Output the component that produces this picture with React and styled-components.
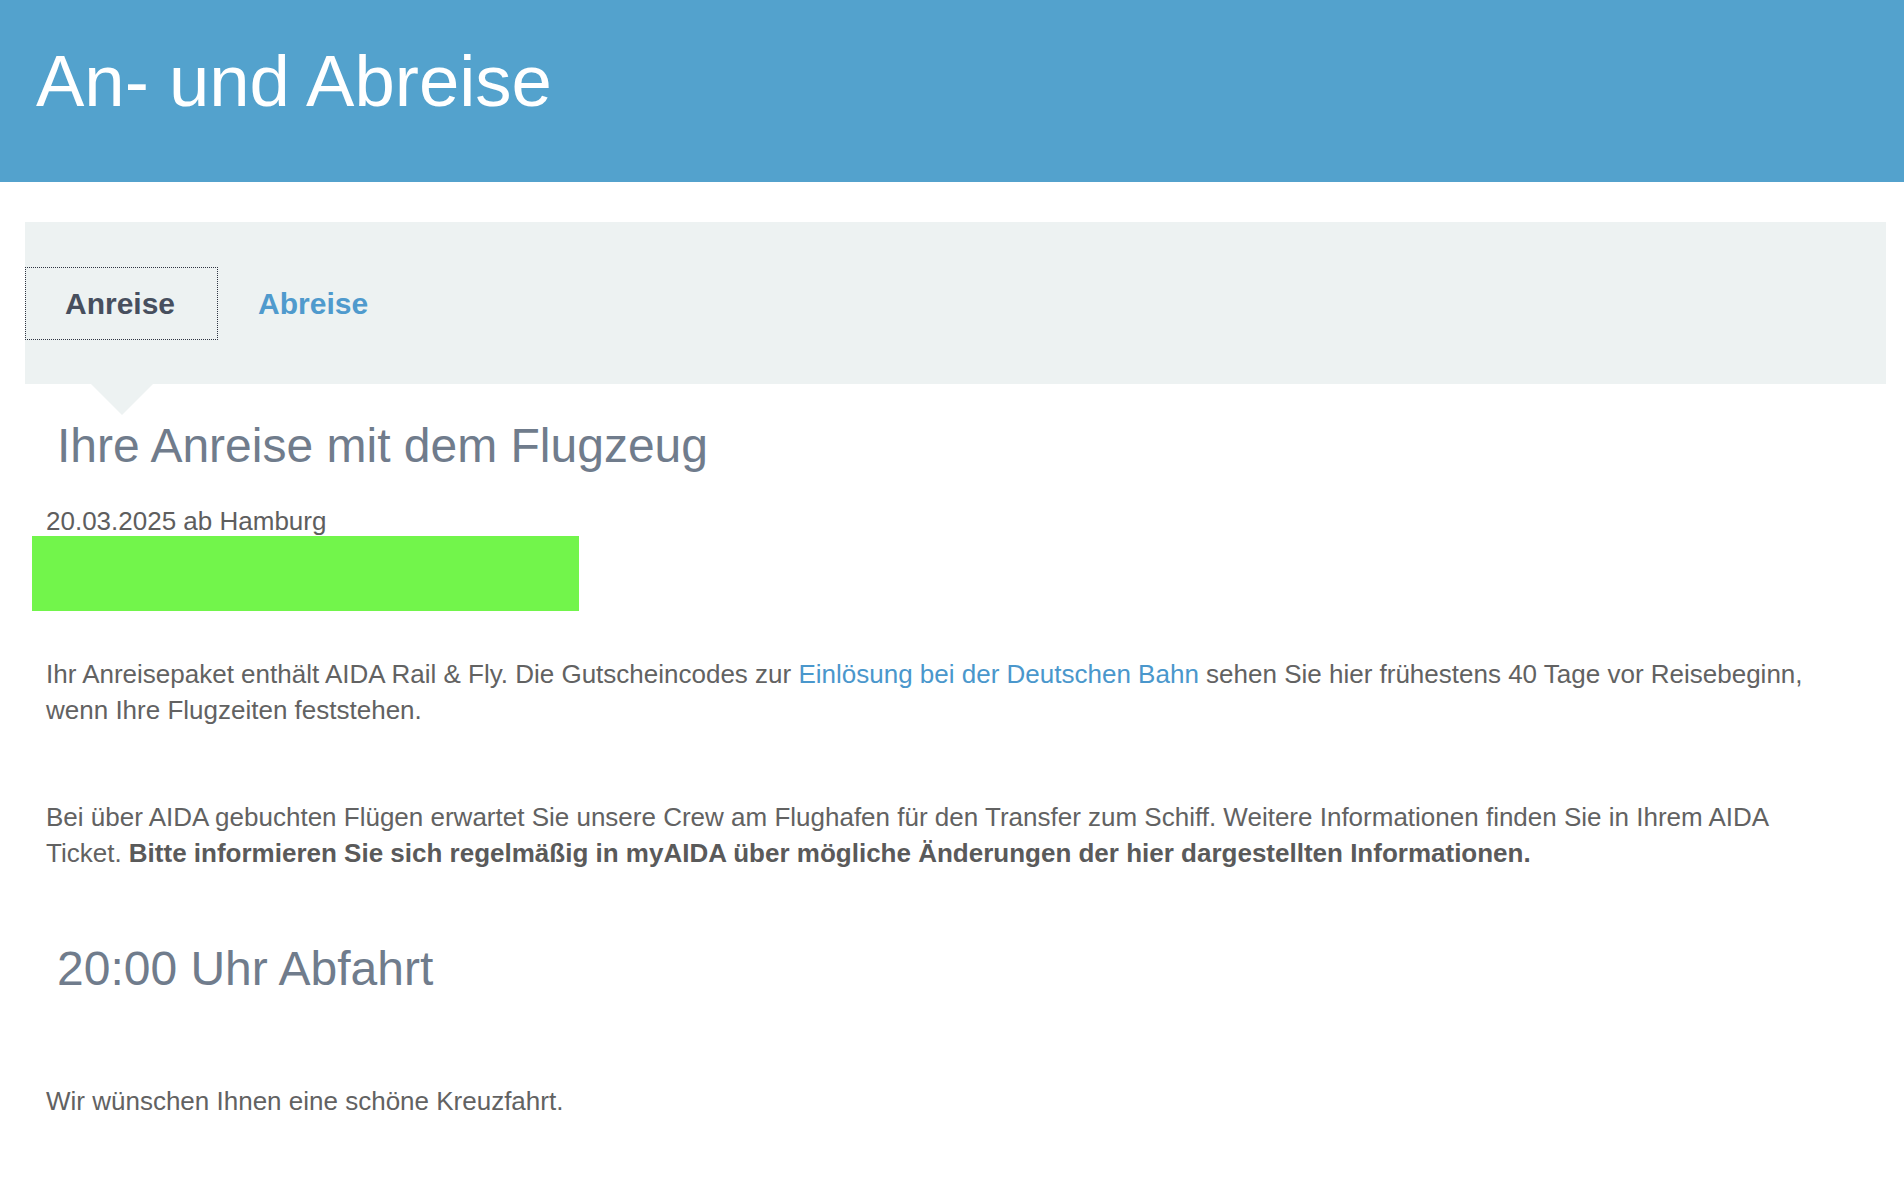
import React from 'react';
import styled, { createGlobalStyle } from 'styled-components';

const GlobalStyle = createGlobalStyle`
    html, body {
        margin: 0;
        padding: 0;
        background: #ffffff;
    }
    body {
        font-family: 'Liberation Sans', Arial, Helvetica, sans-serif;
        color: #626262;
    }
    * {
        box-sizing: border-box;
    }
`;

const tabs = [
    { key: 'arrival', label: 'Anreise' },
    { key: 'departure', label: 'Abreise' },
];

const App = () => {
    const active = 'arrival';
    return (
        <Page>
            <GlobalStyle />
            <Header>
                <PageTitle>An- und Abreise</PageTitle>
            </Header>
            <TabPanel>
                <TabList>
                    {tabs.map((tab) => (
                        <Tab key={tab.key} $active={tab.key === active}>
                            {tab.label}
                        </Tab>
                    ))}
                </TabList>
            </TabPanel>
            <Content>
                <Heading>Ihre Anreise mit dem Flugzeug</Heading>
                <DateLine>20.03.2025 ab Hamburg</DateLine>
                <Redacted />
                <Paragraph $gap="45px">
                    Ihr Anreisepaket enthält AIDA Rail &amp; Fly. Die
                    Gutscheincodes zur{' '}
                    <Link href="#">Einlösung bei der Deutschen Bahn</Link>{' '}
                    sehen Sie hier frühestens 40 Tage vor Reisebeginn, wenn
                    Ihre Flugzeiten feststehen.
                </Paragraph>
                <Paragraph $gap="71px">
                    Bei über AIDA gebuchten Flügen erwartet Sie unsere Crew am
                    Flughafen für den Transfer zum Schiff. Weitere
                    Informationen finden Sie in Ihrem AIDA Ticket.{' '}
                    <strong>
                        Bitte informieren Sie sich regelmäßig in myAIDA über
                        mögliche Änderungen der hier dargestellten
                        Informationen.
                    </strong>
                </Paragraph>
                <Heading $gap="70px">20:00 Uhr Abfahrt</Heading>
                <Paragraph $gap="87px">
                    Wir wünschen Ihnen eine schöne Kreuzfahrt.
                </Paragraph>
            </Content>
        </Page>
    );
};

const Page = styled.div`
    min-height: 1180px;
    padding-bottom: 60px;
`;

const Header = styled.header`
    height: 182px;
    background: #53a2cd;
    padding: 45px 36px 0;
`;

const PageTitle = styled.h1`
    margin: 0;
    font-size: 72.5px;
    line-height: 1;
    font-weight: normal;
    color: #ffffff;
`;

const TabPanel = styled.nav`
    margin: 40px 18px 0 25px;
    height: 162px;
    background: #edf2f2;
    padding-top: 45px;
`;

const TabList = styled.div`
    display: flex;
    align-items: center;
`;

const Tab = styled.div`
    position: relative;
    height: 73px;
    line-height: 71px;
    padding: 0 42px 0 39px;
    font-size: 30px;
    font-weight: bold;
    color: ${({ $active }) => ($active ? '#474f5e' : '#4f9acd')};
    border: 1px dotted ${({ $active }) => ($active ? '#2f3542' : 'transparent')};
    cursor: pointer;

    /* pointer under the selected tab */
    &::after {
        content: '';
        display: ${({ $active }) => ($active ? 'block' : 'none')};
        position: absolute;
        top: calc(100% + 44px);
        left: 50%;
        transform: translateX(-50%);
        border-left: 32px solid transparent;
        border-right: 32px solid transparent;
        border-top: 32px solid #edf2f2;
    }
`;

const Content = styled.main`
    margin: 34px 18px 0 25px;
    padding: 0 60px 0 21px;
`;

const Heading = styled.h2`
    margin: ${({ $gap }) => $gap || '0'} 0 0;
    padding-left: 11px;
    font-size: 48px;
    line-height: 55px;
    font-weight: normal;
    color: #707c8c;
`;

const DateLine = styled.div`
    margin-top: 34px;
    font-size: 26px;
    line-height: 29px;
    color: #5e5e5e;
`;

const Redacted = styled.div`
    margin-left: -14px;
    width: 547px;
    height: 75px;
    background: #72f54b;
`;

const Paragraph = styled.p`
    margin: ${({ $gap }) => $gap || '0'} 0 0;
    font-size: 26px;
    line-height: 36px;
    color: #626262;

    strong {
        font-weight: bold;
        color: #5a5a5a;
    }
`;

const Link = styled.a`
    color: #4a97cc;
    text-decoration: none;
`;

export default App;
